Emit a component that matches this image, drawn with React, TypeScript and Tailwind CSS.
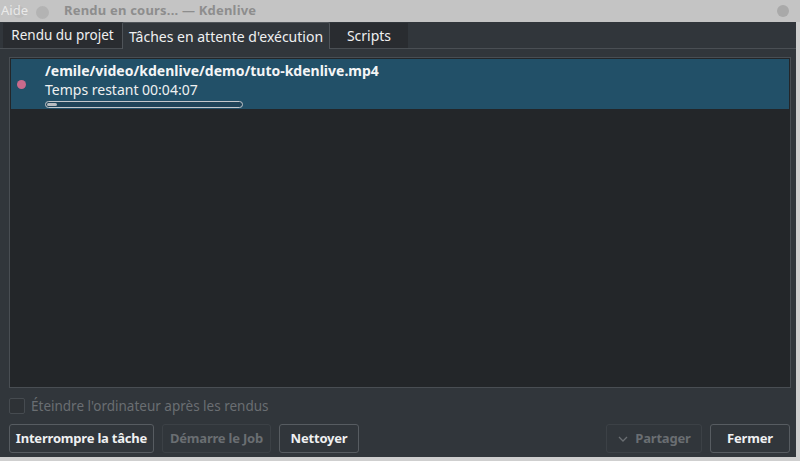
import React from "react";

const font = { fontFamily: '"Noto Sans", "DejaVu Sans", sans-serif' };

function Btn({ children, disabled, w }: { children: React.ReactNode; disabled?: boolean; w: string }) {
  return (
    <div
      className={`${w} h-[29px] flex items-center justify-center whitespace-nowrap rounded-[3px] border text-[13px] font-bold tracking-[-0.2px] ${
        disabled ? "border-[#3c4146] text-[#6a6e72]" : "border-[#575c61] text-[#eff0f1]"
      } bg-[#31363b]`}
    >
      {children}
    </div>
  );
}

export default function App() {
  return (
    <div className="w-[800px] h-[461px] bg-[#cfcfcf] overflow-hidden relative" style={font}>
      {/* title bar */}
      <div className="h-[22px] bg-[#c4c4c4] flex items-center relative">
        <div className="absolute left-[13px] top-[6px] w-[12px] h-[12px] rounded-full bg-[#bcbcbc]" />
        <div className="absolute left-[36px] top-[6px] w-[13px] h-[13px] rounded-full bg-[#b3b3b3]" />
        <span className="absolute left-[1px] top-[1px] text-[13px] text-[#f4f4f4] opacity-80">Aide</span>
        <span className="ml-[64px] text-[13px] font-bold text-[#8d8d8d] tracking-[0.2px]">Rendu en cours... — Kdenlive</span>
        <div className="absolute right-[11px] top-[5px] w-[12px] h-[12px] rounded-full bg-[#a9a9a9]" />
      </div>
      {/* window body */}
      <div className="w-[796px] h-[435px] bg-[#31363b] flex flex-col">
        {/* tab bar */}
        <div className="h-[27px] flex items-end pl-[3px] border-b border-[#4a4f54]">
          <div className="h-[25px] w-[119px] bg-[#292c30] flex items-center justify-center text-[13.5px] text-[#eff0f1]">
            Rendu du projet
          </div>
          <div className="h-[27px] w-[208px] mb-[-1px] bg-[#31363b] border border-b-0 border-[#4f5459] flex items-center justify-center text-[14px] text-[#eff0f1] rounded-t-[2px]">
            Tâches en attente d'exécution
          </div>
          <div className="h-[25px] w-[78px] bg-[#292c30] flex items-center justify-center text-[14px] text-[#eff0f1]">
            Scripts
          </div>
        </div>
        {/* pane */}
        <div className="flex-1 flex flex-col pl-[9px] pr-[6px] pt-[8px] pb-[6px]">
          <div className="h-[331px] w-[782px] bg-[#232629] border border-[#494e53] p-[1px]">
            <div className="h-[50px] bg-[#225068] flex items-center">
              <div className="w-[9px] h-[9px] rounded-full bg-[#c96a8c] ml-[6px]" />
              <div className="ml-[19px] flex flex-col">
                <div className="text-[14px] font-bold text-[#f4f5f6] leading-[19px]">/emile/video/kdenlive/demo/tuto-kdenlive.mp4</div>
                <div className="text-[14px] text-[#eff0f1] leading-[19px]">Temps restant 00:04:07</div>
                <div className="mt-[2px] w-[198px] h-[7px] rounded-full border border-[#c4c8cc] bg-[#1f4459] p-[1px] flex">
                  <div className="w-[10px] h-full rounded-full bg-[#b8bcc0]" />
                </div>
              </div>
            </div>
          </div>
          <div className="mt-[10px] flex items-center h-[16px]">
            <div className="w-[16px] h-[16px] rounded-[2px] border border-[#464b50] bg-[#2e3236]" />
            <span className="ml-[6px] text-[13.5px] text-[#6a6e72]">Éteindre l'ordinateur après les rendus</span>
          </div>
          <div className="mt-[10px] flex items-center">
            <Btn w="w-[145px]">Interrompre la tâche</Btn>
            <div className="w-[8px]" />
            <Btn w="w-[109px]" disabled>Démarre le Job</Btn>
            <div className="w-[8px]" />
            <Btn w="w-[80px]">Nettoyer</Btn>
            <div className="flex-1" />
            <Btn w="w-[96px]" disabled>
              <svg width="12" height="12" viewBox="0 0 12 12" className="mr-[6px]">
                <path d="M2 4 L6 8 L10 4" fill="none" stroke="#6a6e72" strokeWidth="1.3" />
              </svg>
              Partager
            </Btn>
            <div className="w-[8px]" />
            <Btn w="w-[80px]">Fermer</Btn>
          </div>
        </div>
      </div>
    </div>
  );
}
